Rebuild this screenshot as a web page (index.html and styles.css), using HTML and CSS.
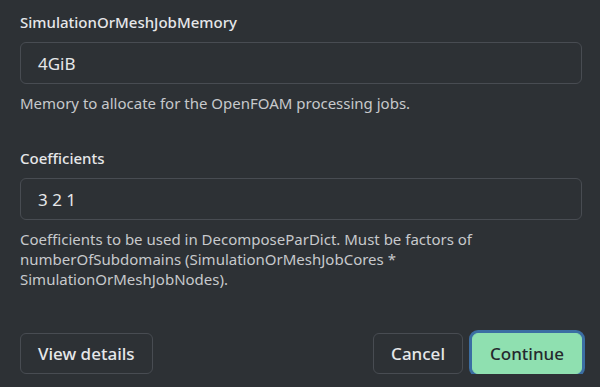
FILE: index.html
```html
<!DOCTYPE html>
<html>
<head>
<meta charset="utf-8">
<link rel="stylesheet" href="styles.css">
</head>
<body>
<div class="dialog">
  <div class="field">
    <label class="label">SimulationOrMeshJobMemory</label>
    <div class="input">4GiB</div>
    <p class="help">Memory to allocate for the OpenFOAM processing jobs.</p>
  </div>
  <div class="field">
    <label class="label">Coefficients</label>
    <div class="input">3 2 1</div>
    <p class="help">Coefficients to be used in DecomposeParDict. Must be factors of numberOfSubdomains (SimulationOrMeshJobCores * SimulationOrMeshJobNodes).</p>
  </div>
  <div class="footer">
    <button class="btn">View details</button>
    <div class="actions">
      <button class="btn">Cancel</button>
      <button class="btn primary">Continue</button>
    </div>
  </div>
</div>
</body>
</html>
```
FILE: styles.css
```css
html, body {
  margin: 0;
  padding: 0;
  background: #2d3135;
  font-family: "Noto Sans", "Open Sans", sans-serif;
}
.dialog {
  padding: 12px 18px 0 20px;
  display: flex;
  flex-direction: column;
}
.field {
  display: flex;
  flex-direction: column;
}
.field + .field {
  margin-top: 35px;
}
.label {
  font-size: 15px;
  font-weight: 500;
  line-height: 20px;
  color: #e6e7e9;
  margin-bottom: 10px;
}
.input {
  box-sizing: border-box;
  height: 42px;
  border: 1px solid #484c52;
  border-radius: 6px;
  padding: 0 17px;
  display: flex;
  align-items: center;
  font-size: 17px;
  color: #e6e7e9;
}
.help {
  margin: 9px 0 0;
  font-size: 15px;
  line-height: 20px;
  color: #c7c9cc;
}
.footer {
  margin-top: 44px;
  display: flex;
  justify-content: space-between;
  align-items: center;
}
.actions {
  display: flex;
  gap: 9px;
}
.btn {
  font-family: inherit;
  font-size: 17px;
  font-weight: 500;
  height: 41px;
  padding: 0 17px;
  border: 1px solid #484c52;
  border-radius: 6px;
  background: #2d3135;
  color: #e6e7e9;
}
.btn.primary {
  background: #8fe0b0;
  border-color: #8fe0b0;
  color: #25292d;
  box-shadow: 0 0 0 3px #3b6ea3;
}
```
